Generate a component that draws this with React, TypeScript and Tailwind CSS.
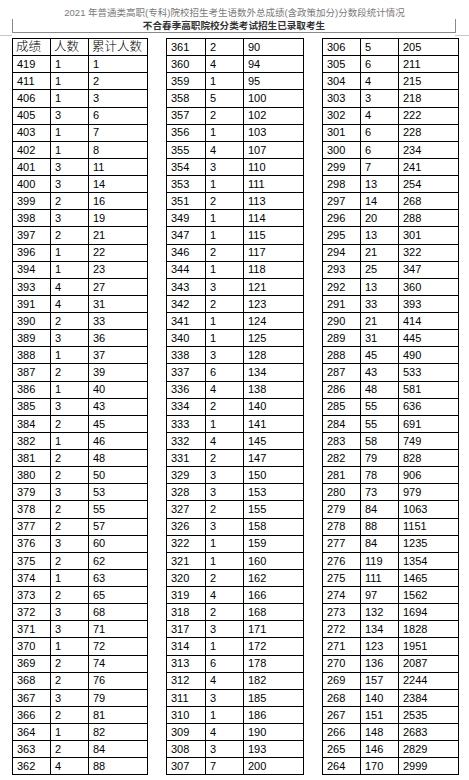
const left = `419 1 1,411 1 2,406 1 3,405 3 6,403 1 7,402 1 8,401 3 11,400 3 14,399 2 16,398 3 19,397 2 21,396 1 22,394 1 23,393 4 27,391 4 31,390 2 33,389 3 36,388 1 37,387 2 39,386 1 40,385 3 43,384 2 45,382 1 46,381 2 48,380 2 50,379 3 53,378 2 55,377 2 57,376 3 60,375 2 62,374 1 63,373 2 65,372 3 68,371 3 71,370 1 72,369 2 74,368 2 76,367 3 79,366 2 81,364 1 82,363 2 84,362 4 88`;

const middle = `361 2 90,360 4 94,359 1 95,358 5 100,357 2 102,356 1 103,355 4 107,354 3 110,353 1 111,351 2 113,349 1 114,347 1 115,346 2 117,344 1 118,343 3 121,342 2 123,341 1 124,340 1 125,338 3 128,337 6 134,336 4 138,334 2 140,333 1 141,332 4 145,331 2 147,329 3 150,328 3 153,327 2 155,326 3 158,322 1 159,321 1 160,320 2 162,319 4 166,318 2 168,317 3 171,314 1 172,313 6 178,312 4 182,311 3 185,310 1 186,309 4 190,308 3 193,307 7 200`;

const right = `306 5 205,305 6 211,304 4 215,303 3 218,302 4 222,301 6 228,300 6 234,299 7 241,298 13 254,297 14 268,296 20 288,295 13 301,294 21 322,293 25 347,292 13 360,291 33 393,290 21 414,289 31 445,288 45 490,287 43 533,286 48 581,285 55 636,284 55 691,283 58 749,282 79 828,281 78 906,280 73 979,279 84 1063,278 88 1151,277 84 1235,276 119 1354,275 111 1465,274 97 1562,273 132 1694,272 134 1828,271 123 1951,270 136 2087,269 157 2244,268 140 2384,267 151 2535,266 148 2683,265 146 2829,264 170 2999`;

function parse(s: string): string[][] {
  return s.split(',').map(r => r.split(' '));
}

function ScoreTable({ rows, cols, header }: { rows: string[][]; cols: string; header?: boolean }) {
  const all = header ? [['成绩', '人数', '累计人数'], ...rows] : rows;
  return (
    <div className={`grid ${cols} border-l border-t border-black`}>
      {all.map((r, i) =>
        r.map((c, j) => (
          <div
            key={`${i}-${j}`}
            className={`h-[17.14px] border-r border-b border-black flex items-center text-black ${
              header && i === 0 ? 'text-[12.5px] font-light pl-[3px]' : 'text-[11px] pl-[4px]'
            }`}
          >
            {c}
          </div>
        ))
      )}
    </div>
  );
}

export default function App() {
  return (
    <div
      className="w-[469px] h-[780px] bg-white overflow-hidden"
      style={{ fontFamily: '"Liberation Sans", "Noto Sans CJK SC", sans-serif' }}
    >
      {/* heading */}
      <div className="h-[19px] flex items-end justify-center pb-[2px] text-[9.5px] leading-none text-[#7a7a7a]">
        2021 年普通类高职(专科)院校招生考生语数外总成绩(含政策加分)分数段统计情况
      </div>
      <div className="ml-[12px] w-[444px] h-[14px] border-x border-b border-[#8a8a8a] flex items-center justify-center text-[9.6px] leading-none font-bold text-[#333]">
        不合春季高职院校分类考试招生已录取考生
      </div>
      <div className="flex justify-between h-[5px] items-center">
        <div className="w-[12px] h-px bg-[#c8c8c8]" />
        <div className="w-[14px] h-px bg-[#c8c8c8]" />
      </div>

      <div className="flex gap-[18px] pl-[12px]">
        <ScoreTable rows={parse(left)} cols="grid-cols-[38px_38px_59px]" header />
        <ScoreTable rows={parse(middle)} cols="grid-cols-[39px_38px_60px]" />
        <ScoreTable rows={parse(right)} cols="grid-cols-[38px_38px_60px]" />
      </div>
    </div>
  );
}
